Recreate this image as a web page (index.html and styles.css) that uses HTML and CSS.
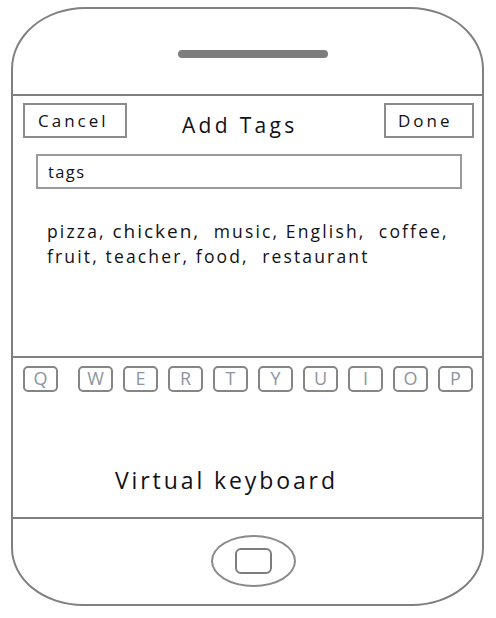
FILE: index.html
```html
<!DOCTYPE html>
<html>
<head>
<meta charset="utf-8">
<link rel="stylesheet" href="styles.css">
</head>
<body>
<div class="phone">
  <div class="bezel-top">
    <div class="speaker"></div>
  </div>
  <div class="screen">
    <div class="header">
      <div class="btn btn-cancel">Cancel</div>
      <div class="title">Add Tags</div>
      <div class="btn btn-done">Done</div>
    </div>
    <div class="input">tags</div>
    <p class="tags">pizza, <span class="big">chicken,</span>&nbsp; music, English,&nbsp; coffee,<br>fruit, teacher, food,&nbsp; restaurant</p>
  </div>
  <div class="keyboard">
    <div class="keys">
      <span class="key key-q">Q</span>
      <span class="key">W</span>
      <span class="key">E</span>
      <span class="key">R</span>
      <span class="key">T</span>
      <span class="key">Y</span>
      <span class="key">U</span>
      <span class="key">I</span>
      <span class="key">O</span>
      <span class="key">P</span>
    </div>
    <div class="kb-label">Virtual keyboard</div>
  </div>
  <div class="bezel-bottom">
    <div class="home">
      <div class="home-inner"></div>
    </div>
  </div>
</div>
</body>
</html>
```
FILE: styles.css
```css
html, body {
  margin: 0;
  padding: 0;
  background: #ffffff;
}
body {
  width: 496px;
  height: 618px;
  font-family: "Open Sans", "Noto Sans", sans-serif;
  color: #111118;
}
.phone {
  box-sizing: border-box;
  margin: 7px 0 0 11px;
  width: 473px;
  height: 599px;
  border: 2px solid #808080;
  border-radius: 74px 74px 72px 72px / 62px 62px 58px 58px;
  display: flex;
  flex-direction: column;
  overflow: hidden;
}
.bezel-top {
  height: 87px;
  box-sizing: border-box;
  padding: 41px 0 0 165px;
  border-bottom: 2px solid #808080;
  flex: none;
}
.speaker {
  width: 150px;
  height: 8px;
  border-radius: 4px;
  background: #7d7d7d;
}
.screen {
  height: 262px;
  flex: none;
  box-sizing: border-box;
  padding: 7px 8px 0 10px;
  border-bottom: 2px solid #808080;
}
.header {
  display: flex;
  align-items: flex-start;
}
.btn {
  box-sizing: border-box;
  height: 35px;
  border: 2px solid #8c8c8c;
  font-size: 17px;
  letter-spacing: 3px;
  line-height: 31px;
  padding-left: 13px;
}
.btn-cancel {
  width: 104px;
}
.btn-done {
  width: 90px;
  padding-left: 12px;
  margin-left: auto;
}
.title {
  font-size: 21px;
  letter-spacing: 3.3px;
  line-height: 32px;
  margin: 6px 0 0 55px;
}
.input {
  box-sizing: border-box;
  margin: 13px 0 0 13px;
  width: 426px;
  height: 35px;
  border: 2px solid #9a9a9a;
  font-size: 16.5px;
  letter-spacing: 1.4px;
  line-height: 31px;
  padding-left: 10px;
}
.tags {
  margin: 30px 0 0 24px;
  font-size: 17.5px;
  letter-spacing: 2.15px;
  line-height: 25px;
}
.tags .big {
  font-size: 19px;
  letter-spacing: 2px;
}
.keyboard {
  height: 161px;
  flex: none;
  box-sizing: border-box;
  padding: 8px 0 0 10px;
  border-bottom: 2px solid #808080;
}
.keys {
  display: flex;
  gap: 10px;
}
.key {
  box-sizing: border-box;
  width: 35px;
  height: 26px;
  border: 2.5px solid #858585;
  border-radius: 5px;
  font-size: 18px;
  line-height: 21px;
  text-align: center;
  color: #8e94a0;
}
.key-q {
  margin-right: 10px;
}
.kb-label {
  margin: 73px 0 0 92px;
  font-size: 23px;
  letter-spacing: 2.9px;
  line-height: 30px;
}
.bezel-bottom {
  flex: 1;
  display: flex;
  justify-content: center;
  padding: 16px 0 0 12px;
  box-sizing: border-box;
}
.home {
  box-sizing: border-box;
  width: 85px;
  height: 52px;
  border: 2px solid #8a8a8a;
  border-radius: 50%;
  display: flex;
  align-items: center;
  justify-content: center;
}
.home-inner {
  box-sizing: border-box;
  width: 37px;
  height: 26px;
  border: 2.5px solid #7d7d7d;
  border-radius: 6px;
}
```
